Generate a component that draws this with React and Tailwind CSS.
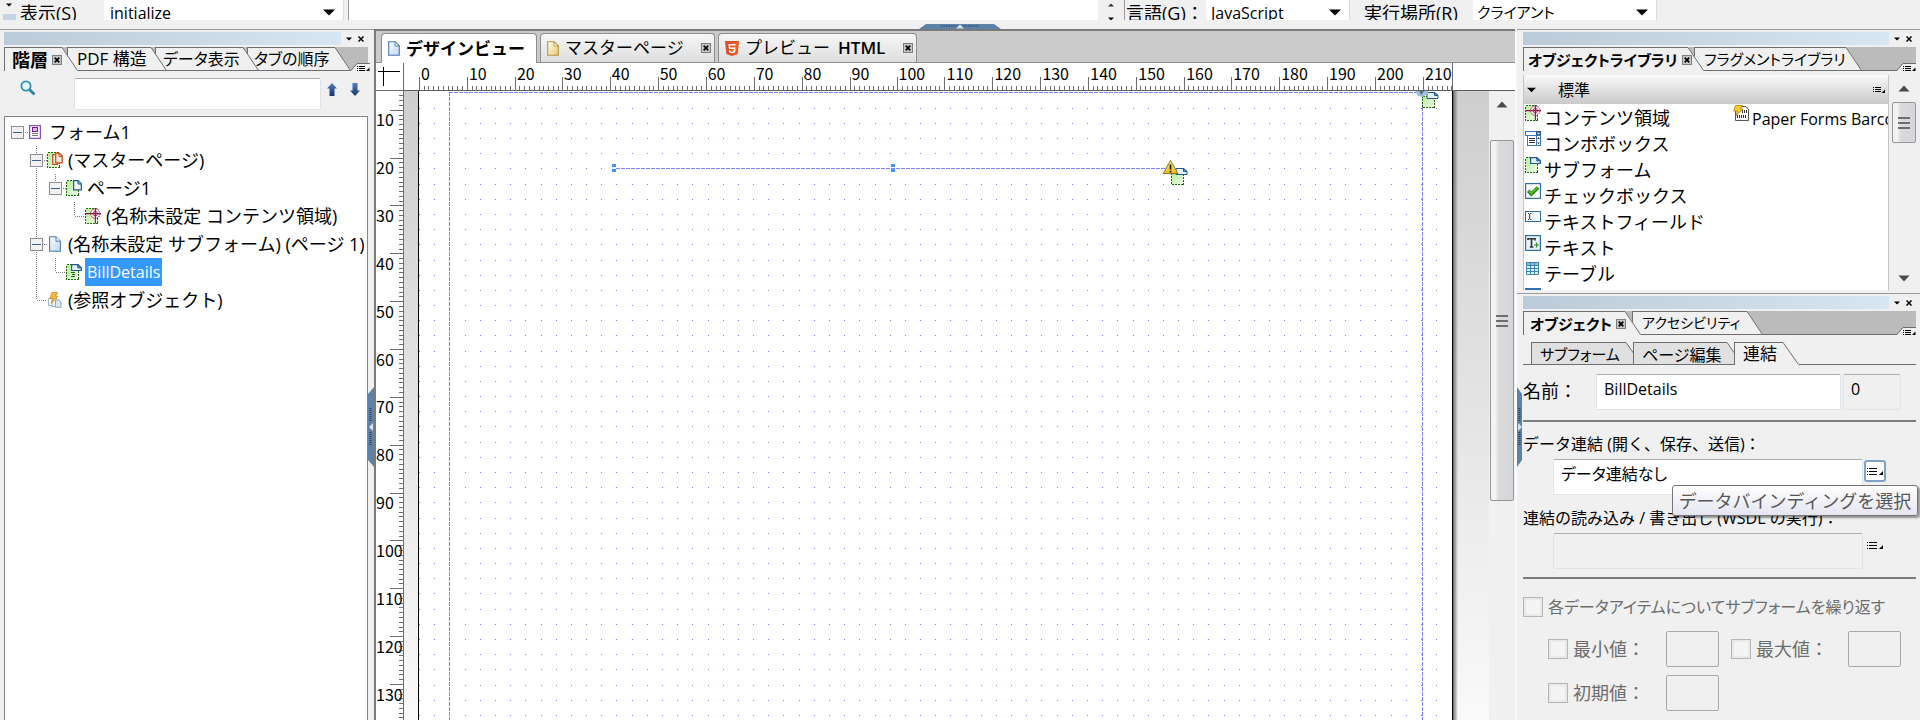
import React from "react";

const UI = "font-['Open_Sans','Noto_Sans_CJK_JP',sans-serif]";

/* ---------- small glyphs ---------- */

function Caret({ className = "" }) {
  return (
    <svg width="12" height="7" viewBox="0 0 12 7" className={className} aria-hidden="true">
      <path d="M0 0.5H12L6 6.5Z" fill="#000" />
    </svg>
  );
}

function TinyCaret() {
  return (
    <svg width="6" height="4" viewBox="0 0 6 4" aria-hidden="true">
      <path d="M0 0.5H6L3 3.5Z" fill="#000" />
    </svg>
  );
}

function TinyX() {
  return (
    <svg width="6" height="6" viewBox="0 0 6 6" aria-hidden="true">
      <path d="M0.5 0.5L5.5 5.5M5.5 0.5L0.5 5.5" stroke="#000" strokeWidth="1.5" />
    </svg>
  );
}

function CloseBox() {
  return (
    <button type="button" aria-label="閉じる" className="relative z-10 block size-[10px] shrink-0">
      <svg width="10" height="10" viewBox="0 0 10 10" aria-hidden="true">
        <rect x="0.5" y="0.5" width="9" height="9" fill="#c8c8c8" stroke="#7c7c7c" />
        <path d="M2.7 2.7L7.3 7.3M7.3 2.7L2.7 7.3" stroke="#000" strokeWidth="1.7" />
      </svg>
    </button>
  );
}

function MenuGlyph({ wide }) {
  if (wide) {
    return (
      <svg width="16" height="9" viewBox="0 0 16 9" shapeRendering="crispEdges" aria-hidden="true">
        <path d="M0 1.5H1M0 4.5H1M0 7.5H1M2 1.5H10M2 4.5H10M2 7.5H10" stroke="#000" />
        <path d="M16 4V8H12Z" fill="#000" shapeRendering="auto" />
      </svg>
    );
  }
  return (
    <svg width="13" height="8" viewBox="0 0 13 8" shapeRendering="crispEdges" aria-hidden="true">
      <path d="M0 1.5H1M0 3.5H1M0 5.5H1M2 1.5H8M2 3.5H8M2 5.5H8" stroke="#000" />
      <path d="M12 3.5V7H8.5Z" fill="#000" shapeRendering="auto" />
    </svg>
  );
}

function ArrowTri({ down }) {
  return (
    <svg width="12" height="7" viewBox="0 0 12 7" aria-hidden="true">
      <path d={down ? "M0.5 0.5H11.5L6 6.5Z" : "M6 0.5L11.5 6.5H0.5Z"} fill="#4a4a4a" />
    </svg>
  );
}

/* ---------- object icons ---------- */

function GreenBox({ w = 13, h = 16, x = 0, y = 0 }) {
  return (
    <g>
      <rect x={x + 0.5} y={y + 0.5} width={w - 1} height={h - 1} fill="url(#leaf)" />
      <rect
        x={x + 0.5}
        y={y + 0.5}
        width={w - 1}
        height={h - 1}
        fill="none"
        stroke="#1d6b0a"
        strokeDasharray="2 1"
        shapeRendering="crispEdges"
      />
    </g>
  );
}

function Icon({ kind }) {
  const art = {
    form: (
      <>
        <rect x="1.6" y="1.6" width="10.8" height="12.8" fill="#fff" stroke="#8a4fc0" strokeWidth="1.3" />
        <rect x="4.5" y="3.5" width="5" height="4" fill="#d9b8ee" stroke="#6d1ea0" />
        <path d="M4 9.5H10M4 11.5H10" stroke="#777" />
      </>
    ),
    master: (
      <>
        <GreenBox />
        <path d="M5.7 2.7H10.5V12.3H5.7Z" fill="#fff" stroke="#c8501c" strokeWidth="1.3" />
        <path d="M8.7 1.2H12.3L15.2 4V10.8H8.7Z" fill="#fbe6da" stroke="#c8501c" strokeWidth="1.3" />
        <path d="M12 1.2V4.4H15.2" fill="none" stroke="#c8501c" />
      </>
    ),
    page: (
      <>
        <GreenBox />
        <path d="M7.6 0.7H12.2L15.3 3.8V9.8H7.6Z" fill="#eef5fc" stroke="#1f5a92" strokeWidth="1.2" />
        <path d="M12 0.9V4H15.2" fill="#9cc0e2" stroke="#1f5a92" />
      </>
    ),
    content: (
      <>
        <GreenBox />
        <circle cx="10.3" cy="5.6" r="4.8" fill="#fbe4ee" stroke="#a33a68" strokeDasharray="1.6 0.6" />
        <circle cx="10.3" cy="5.6" r="2.2" fill="none" stroke="#a33a68" strokeWidth="0.9" />
        <path d="M0 5.6H16M10.4 0V15.5" stroke="#8e1c4c" strokeWidth="1.2" />
      </>
    ),
    doc: (
      <>
        <path d="M2.6 0.7H9L13.4 5.2V15.3H2.6Z" fill="url(#sky)" stroke="#4a7db0" strokeWidth="1.1" />
        <path d="M9 0.8V5.2H13.3" fill="#f7fbff" stroke="#4a7db0" />
      </>
    ),
    subform: (
      <>
        <GreenBox />
        <path d="M5.6 0.7H12L15.3 3.8V6.5H5.6Z" fill="#e6f1fb" stroke="#1f5a92" strokeWidth="1.2" />
        <path d="M11.8 0.9V3.9H15.2Z" fill="#7ba9d4" stroke="#1f5a92" />
      </>
    ),
    flow: (
      <>
        <GreenBox />
        <path d="M5.6 0.7H12L15.3 3.8V6.5H5.6Z" fill="#e6f1fb" stroke="#1f5a92" strokeWidth="1.2" />
        <path d="M11.8 0.9V3.9H15.2Z" fill="#7ba9d4" stroke="#1f5a92" />
        <path d="M5 8.5H9M6 10.5H9M5 12.5H9" stroke="#1d6b0a" />
      </>
    ),
    reference: (
      <>
        <path d="M1.5 6.5H6V13.5H1.5Z" fill="#fff" stroke="#9fb2c9" />
        <path d="M5 6.5H9.5V14.5H5Z" fill="#f2f6fb" stroke="#9fb2c9" />
        <path d="M8.5 8H12L14 10V15.3H8.5Z" fill="#dbe7f5" stroke="#8ba6c6" />
        <path d="M5 0.5H10.5L8.5 4.2H11L4.2 11.5L5.8 6.6H2.8Z" fill="#f6b83c" stroke="#d2862a" strokeWidth="0.8" />
      </>
    ),
    combo: (
      <>
        <rect x="0.5" y="0.5" width="15" height="4" fill="#fff" stroke="#3c78b0" />
        <rect x="11" y="0" width="5" height="5" fill="#2a5d8e" />
        <path d="M12 1.8H15L13.5 3.6Z" fill="#fff" />
        <rect x="2.5" y="4.5" width="13" height="10" fill="#fff" stroke="#3c78b0" />
        <path d="M4 7.5H10M4 9.5H10M4 11.5H10" stroke="#333" />
        <path d="M11.5 5V14" stroke="#3c78b0" />
        <path d="M12.3 8H14.9L13.6 6ZM12.3 11.5H14.9L13.6 13.3Z" fill="#333" />
      </>
    ),
    check: (
      <>
        <rect x="0.6" y="0.6" width="14.8" height="14.8" fill="#fff" stroke="#2f6fab" strokeWidth="1.2" />
        <path d="M3.2 7.8L6.4 11L13 4.4" fill="none" stroke="#1d7d05" strokeWidth="3.6" />
        <path d="M3.8 7.9L6.4 10.4L12.5 4.6" fill="none" stroke="#4ec422" strokeWidth="1.8" />
      </>
    ),
    field: (
      <>
        <rect x="0.5" y="2.5" width="15" height="10" fill="#f4f9ff" stroke="#2f6fab" />
        <path d="M3 4.5H4.2M5.2 4.5H6.4M3 10.5H4.2M5.2 10.5H6.4M4.7 5V10" stroke="#333" />
      </>
    ),
    text: (
      <>
        <rect x="0.6" y="0.6" width="14.8" height="14.8" fill="#e9f2fb" stroke="#2f6fab" strokeWidth="1.2" />
        <path d="M3 5V3.8H10V5.4M6.5 4V12.2M4.8 12H8.4" fill="none" stroke="#333" strokeWidth="1.6" />
        <path d="M11.5 7.5V12.5M9 10H14" stroke="#239a12" strokeWidth="1.2" />
      </>
    ),
    table: (
      <>
        <rect x="1" y="1" width="13" height="13" fill="#e2f2fa" />
        <rect x="1" y="1" width="13" height="3" fill="#8cc3e0" />
        <path d="M1.5 1.5H13.5V13.5H1.5ZM1.5 4.5H13.5M1.5 7.5H13.5M1.5 10.5H13.5M5.5 1.5V13.5M9.5 1.5V13.5" fill="none" stroke="#3b85ad" />
      </>
    ),
    barcode: (
      <>
        <path d="M3.5 1.5H12.5L15.5 4V15.5H2.5V1.5Z" fill="#fff" stroke="#555" />
        <path d="M9.5 4V8M11.5 5V8M13.5 5V8M4.5 10V13M6.5 10V13M8.5 10V13M10.5 10V13M12.5 10V13" stroke="#333" />
        <path d="M2.5 0.5H9.5L7.5 4H10L3 10.5L4.5 6H0.8Z" fill="#ffce2e" stroke="#b98306" strokeWidth="0.9" />
      </>
    ),
  };
  return (
    <svg width="16" height="16" viewBox="0 0 16 16" className="block shrink-0" aria-hidden="true">
      {art[kind]}
    </svg>
  );
}

function PageGlyph({ gold }) {
  return (
    <svg width="12" height="15" viewBox="0 0 12 15" className="shrink-0" aria-hidden="true">
      <path
        d="M0.7 0.7H7L11.3 5V14.3H0.7Z"
        fill={gold ? "url(#gold)" : "url(#sky)"}
        stroke={gold ? "#b8923c" : "#4a76b4"}
        strokeWidth="1.1"
      />
      <path d="M7 0.8V5H11.2Z" fill="#fff" stroke={gold ? "#b8923c" : "#4a76b4"} strokeWidth="0.9" />
    </svg>
  );
}

function Html5Glyph() {
  return (
    <svg width="14" height="15" viewBox="0 0 14 15" className="shrink-0" aria-hidden="true">
      <path d="M0 0H14L12.7 13L7 15L1.3 13Z" fill="#e44d26" />
      <path d="M7 1.2V13.7L11.6 12.1L12.7 1.2Z" fill="#f16529" />
      <path d="M10.5 3.8H4.2L4.6 7.2H9.8L9.4 10.6L7 11.4L4.7 10.6L4.6 9.2" fill="none" stroke="#fff" strokeWidth="1.5" />
    </svg>
  );
}

function Gradients() {
  return (
    <svg width="0" height="0" className="absolute" aria-hidden="true">
      <defs>
        <linearGradient id="leaf" x1="0" y1="0" x2="1" y2="1">
          <stop offset="0" stopColor="#b4ec96" />
          <stop offset="1" stopColor="#f4fdee" />
        </linearGradient>
        <linearGradient id="sky" x1="0" y1="0" x2="1" y2="1">
          <stop offset="0" stopColor="#ffffff" />
          <stop offset="1" stopColor="#b9d6f5" />
        </linearGradient>
        <linearGradient id="gold" x1="0" y1="0" x2="1" y2="1">
          <stop offset="0" stopColor="#ffffff" />
          <stop offset="1" stopColor="#e8c766" />
        </linearGradient>
        <linearGradient id="warn" x1="0" y1="0" x2="0" y2="1">
          <stop offset="0" stopColor="#fff08a" />
          <stop offset="1" stopColor="#eeb90e" />
        </linearGradient>
        <linearGradient id="steel" x1="0" y1="0" x2="0" y2="1">
          <stop offset="0" stopColor="#4f7fc0" />
          <stop offset="1" stopColor="#1c3470" />
        </linearGradient>
      </defs>
    </svg>
  );
}

/* ---------- top script bar ---------- */

function BarSelect({ id, value, className }) {
  return (
    <div className={`relative flex h-[26px] shrink-0 items-center border-r border-[#dcdcdc] bg-white ${className}`}>
      <select
        id={id}
        defaultValue={value}
        className="h-full w-full appearance-none bg-transparent text-black [font-feature-settings:'palt'] focus:outline-none"
      >
        <option>{value}</option>
      </select>
      <Caret className="pointer-events-none absolute right-2 top-[9px]" />
    </div>
  );
}

function ScriptBar() {
  return (
    <header className="flex h-5 shrink-0 items-start overflow-hidden bg-[#f0f0f0] text-lg">
      <div className="flex w-[18px] shrink-0 flex-col items-center pt-[3px]">
        <TinyCaret />
        <div className="mt-[7px] h-3 w-[13px] bg-[#c3d4e5]" />
      </div>
      <label htmlFor="event" className="flex h-[26px] w-[86px] shrink-0 items-center pl-[2px] whitespace-nowrap">
        表示(S)
      </label>
      <BarSelect id="event" value="initialize" className="w-60 pl-[6px] text-base" />
      <textarea
        aria-label="スクリプト"
        className="ml-1 block h-[26px] min-w-0 flex-1 resize-none border-l border-[#9a9a9a] bg-white focus:outline-none"
      />
      <div className="flex w-[26px] shrink-0 flex-col items-center gap-[10px] pt-[3px]">
        <svg width="6" height="4" viewBox="0 0 6 4" aria-hidden="true">
          <path d="M0 3.5H6L3 0.5Z" fill="#333" />
        </svg>
        <TinyCaret />
      </div>
      <label
        htmlFor="language"
        className="flex h-[26px] w-[82px] shrink-0 items-center border-l border-[#9a9a9a] pl-px whitespace-nowrap"
      >
        言語(G)：
      </label>
      <BarSelect id="language" value="JavaScript" className="w-[144px] pl-[5px] text-base" />
      <label htmlFor="runat" className="flex h-[26px] w-[123px] shrink-0 items-center pl-[14px] whitespace-nowrap">
        実行場所(R)
      </label>
      <BarSelect id="runat" value="クライアント" className="w-[184px] pl-1 text-[15px]" />
      <div className="w-[263px] shrink-0" />
    </header>
  );
}

/* ---------- splitter handles ---------- */

function TopHandle() {
  return (
    <div className="flex h-[9px] shrink-0 items-end justify-center bg-[#f0f0f0]">
      <svg width="82" height="5" viewBox="0 0 82 5" aria-hidden="true">
        <path d="M0 5L7 0H75L82 5Z" fill="#5d82aa" />
        <path d="M22 2H38M44 2H60" stroke="#24425f" strokeDasharray="1.5 1" />
        <path d="M37 4.5L41 0.5L45 4.5Z" fill="#d6e2ee" />
      </svg>
    </div>
  );
}

function SideHandle({ right }) {
  return (
    <svg width="6" height="80" viewBox="0 0 6 80" className="shrink-0" aria-hidden="true">
      <path d={right ? "M0 0L5 7V73L0 80Z" : "M6 0L0 7V73L6 80Z"} fill="#5d82aa" />
      <path d="M2.5 21V35M2.5 45V59" stroke="#24425f" strokeWidth="2" strokeDasharray="1 1" />
      <path d={right ? "M1 36L5 40L1 44Z" : "M5 36L1 40L5 44Z"} fill="#d6e2ee" />
    </svg>
  );
}

/* ---------- docked panel chrome ---------- */

function TitleStrip() {
  return (
    <div className="flex h-[13px] shrink-0">
      <div className="min-w-0 flex-1 bg-linear-to-r from-[#bccbd9] to-[#d8e5f2]" />
      <div className="flex w-[27px] items-center gap-[6px] pl-[5px]">
        <TinyCaret />
        <TinyX />
      </div>
    </div>
  );
}

function Tab({ label, active, closable, className, size = "text-base" }) {
  return (
    <div className={`relative flex h-6 shrink-0 ${className}`}>
      <div
        className={`flex min-w-0 flex-1 items-center gap-1 border-l border-t border-[#6e6e6e] bg-[#f0f0f0] ${
          active ? "" : "border-b"
        }`}
      >
        <button
          type="button"
          className={`relative z-10 whitespace-nowrap text-black ${size} ${active ? "font-bold" : ""}`}
        >
          {label}
        </button>
        {closable && <CloseBox />}
      </div>
      <svg width="16" height="24" viewBox="0 0 16 24" className="shrink-0" aria-hidden="true">
        <path d="M0 0L16 24H0Z" fill="#f0f0f0" />
        <path d="M0 0.5L15.5 23.5" stroke="#6e6e6e" fill="none" />
        {!active && <path d="M0 23.5H16" stroke="#6e6e6e" />}
      </svg>
    </div>
  );
}

function TabStrip({ children }) {
  return (
    <div className="flex h-6 shrink-0 bg-[#bbbbbb] leading-5 [font-feature-settings:'palt']">
      {children}
      <div className="min-w-0 flex-1 border-b border-[#6e6e6e]" />
      <button type="button" aria-label="パネルメニュー" className="relative flex w-[19px] shrink-0 items-end">
        <svg width="19" height="8" viewBox="0 0 19 8" aria-hidden="true">
          <path d="M0 8L6 0.5H19V8Z" fill="#f0f0f0" />
          <path d="M0 7.5L6 0.5H19" fill="none" stroke="#6e6e6e" />
          <path d="M6 3.5H7M6 5.5H7M6 7.5H7M8 3.5H14M8 5.5H14M8 7.5H14" stroke="#000" shapeRendering="crispEdges" />
          <path d="M18.5 4.5V8H15Z" fill="#000" />
        </svg>
      </button>
    </div>
  );
}

/* ---------- hierarchy panel ---------- */

const TREE = [
  { level: 0, icon: "form", label: "フォーム1", open: true, guides: [] },
  { level: 1, icon: "master", label: "(マスターページ)", open: true, more: true, guides: [] },
  { level: 2, icon: "page", label: "ページ1", open: true, guides: [true] },
  { level: 3, icon: "content", label: "(名称未設定 コンテンツ領域)", guides: [true, false] },
  { level: 1, icon: "doc", label: "(名称未設定 サブフォーム) (ページ 1)", open: true, more: true, guides: [] },
  { level: 2, icon: "flow", label: "BillDetails", selected: true, guides: [true] },
  { level: 1, icon: "reference", label: "(参照オブジェクト)", guides: [] },
];

function TreeNodeLead({ node }) {
  return (
    <svg width="17" height="28" viewBox="0 0 17 28" className="shrink-0" shapeRendering="crispEdges" aria-hidden="true">
      <g stroke="#7d7d7d" strokeDasharray="1 1" fill="none">
        {node.level > 0 && <path d={`M6.5 0V${node.more ? 28 : 14}`} />}
        <path d={node.open ? "M14 14.5H17" : "M7 14.5H17"} />
      </g>
      {node.open && (
        <g>
          <rect x="0.5" y="8.5" width="12" height="12" fill="#f1f1f1" stroke="#8f8f8f" />
          <path d="M2 14.5H11" stroke="#3a5f9c" />
        </g>
      )}
    </svg>
  );
}

function TreeRow({ node }) {
  return (
    <li className="flex h-7 items-center">
      {node.level > 0 && <span className="w-[19px] shrink-0" />}
      {node.guides.map((line, i) => (
        <svg key={i} width="19" height="28" viewBox="0 0 19 28" className="shrink-0" shapeRendering="crispEdges" aria-hidden="true">
          {line && <path d="M6.5 0V28" stroke="#7d7d7d" strokeDasharray="1 1" />}
        </svg>
      ))}
      <TreeNodeLead node={node} />
      <Icon kind={node.icon} />
      <button
        type="button"
        className={`ml-[3px] h-7 px-[2px] whitespace-nowrap ${
          node.selected ? "bg-[#3399ff] text-base text-white" : "text-[18px] leading-7 text-black"
        }`}
      >
        {node.label}
      </button>
    </li>
  );
}

function HierarchyPanel() {
  return (
    <aside className="flex w-[374px] shrink-0 border-t border-[#9a9a9a] bg-[#f0f0f0]">
      <div className="flex min-w-0 flex-1 flex-col pl-1 pt-[2px]">
        <TitleStrip />
        <div className="mt-[2px] flex flex-col">
          <TabStrip>
            <Tab label="階層" active closable size="text-lg" className="z-40 w-[74px] [&>div]:pl-[7px]" />
            <Tab label="PDF 構造" size="text-[17px]" className="z-30 -ml-[11px] w-[100px] [&>div]:pl-[9px]" />
            <Tab label="データ表示" className="z-20 -ml-[12px] w-[104px] [&>div]:pl-[7px]" />
            <Tab label="タブの順序" className="z-10 -ml-[12px] w-[104px] [&>div]:pl-[6px]" />
          </TabStrip>
        </div>
        <div className="flex h-[45px] shrink-0 items-start pt-[7px]">
          <svg width="16" height="16" viewBox="0 0 16 16" className="mt-[2px] ml-4 shrink-0" aria-hidden="true">
            <path d="M9 9L14.5 14.5" stroke="#2c7fa6" strokeWidth="2.6" />
            <circle cx="6" cy="6" r="4.6" fill="#e3f5fc" stroke="#2f8fb5" strokeWidth="1.8" />
          </svg>
          <input
            type="text"
            aria-label="検索"
            className="ml-[38px] h-8 min-w-0 flex-1 rounded-[2px] border border-[#dfe3ec] border-t-[#abadb3] bg-white px-2 text-base focus:outline-none"
          />
          <button type="button" aria-label="前へ" className="mt-[5px] ml-[6px]">
            <svg width="10" height="13" viewBox="0 0 10 13" aria-hidden="true">
              <path d="M5 0L10 5.5H7.5V13H2.5V5.5H0Z" fill="url(#steel)" />
            </svg>
          </button>
          <button type="button" aria-label="次へ" className="mt-[5px] mr-2 ml-[13px]">
            <svg width="10" height="13" viewBox="0 0 10 13" aria-hidden="true">
              <path d="M5 13L10 7.5H7.5V0H2.5V7.5H0Z" fill="url(#steel)" />
            </svg>
          </button>
        </div>
        <ul className="min-h-0 flex-1 overflow-hidden border border-b-0 border-[#828790] bg-white pt-[1px] pl-[6px]">
          {TREE.map((node) => (
            <TreeRow key={node.label} node={node} />
          ))}
        </ul>
      </div>
      <div className="flex w-[6px] shrink-0 flex-col items-end pt-[357px]">
        <SideHandle />
      </div>
    </aside>
  );
}

/* ---------- design canvas ---------- */

const MM = 4.785;
const GRID = 15.18;
const PAGE_W = 1033;
const PAGE_H = 1420;
const RULER_TEXT = "font-['Noto_Sans_CJK_JP',sans-serif] text-base";

const range = (n) => Array.from({ length: n }, (_, i) => i);

function HorizontalRuler() {
  const ticks = range(217)
    .map((n) => `M${Math.floor(15.4 + n * MM) + 0.5} ${n % 10 === 0 ? 14 : 23}V27`)
    .join("");
  return (
    <div className="flex h-[28px] min-w-0 flex-1 overflow-hidden border-b border-[#5f5f5f] bg-white">
      <svg
        width="1049"
        height="27"
        viewBox="0 0 1049 27"
        className={`shrink-0 border-r border-[#6e6e6e] ${RULER_TEXT}`}
      >
        <path d={ticks} stroke="#6e6e6e" shapeRendering="crispEdges" />
        {range(22).map((n) => (
          <text key={n} x={Math.floor(17.4 + n * 10 * MM)} y="17">
            {n * 10}
          </text>
        ))}
      </svg>
    </div>
  );
}

function VerticalRuler() {
  const ticks = range(290)
    .filter((n) => n > 6)
    .map((n) => `M${n % 10 === 0 ? 14 : 23} ${Math.floor(n * MM - 28.6) + 0.5}H27`)
    .join("");
  return (
    <div className="w-7 shrink-0 overflow-hidden border-r border-[#6e6e6e] bg-white">
      <svg width="27" height={PAGE_H} viewBox={`0 0 27 ${PAGE_H}`} className={`block ${RULER_TEXT}`}>
        <path d={ticks} stroke="#6e6e6e" shapeRendering="crispEdges" />
        {range(29)
          .slice(1)
          .map((n) => (
            <text key={n} x="0" y={Math.floor(n * 10 * MM - 12)}>
              {n * 10}
            </text>
          ))}
      </svg>
    </div>
  );
}

function PageSurface() {
  const dots = range(90)
    .map((r) => {
      const y = Math.round(16.7 + r * GRID) + 0.5;
      return range(68)
        .map((c) => `M${Math.floor(0.6 + c * GRID)} ${y}h1`)
        .join("");
    })
    .join("");
  return (
    <svg width={PAGE_W} height={PAGE_H} viewBox={`0 0 ${PAGE_W} ${PAGE_H}`} className="block shrink-0 bg-white">
      <g shapeRendering="crispEdges">
        <path d={dots} stroke="#7c7cf0" />
        <path d={`M30.5 1V${PAGE_H}M1003.5 1V${PAGE_H}`} stroke="#fff" />
        <path d={`M30.5 1V${PAGE_H}M30 1.5H1004M1003.5 1V${PAGE_H}`} stroke="#8080f8" strokeDasharray="4 1" />
        <path d="M193 77.5H748" stroke="#fff" />
        <path d="M197 77.5H748" stroke="#8080f8" strokeDasharray="4 1" />
        <path d="M193 73h4v3h-4zM193 78h4v3h-4zM472 73h4v3h-4zM472 78h4v3h-4z" fill="#3399ff" />
      </g>
      <GreenBox x={752} y={82} w={13} h={12} />
      <path d="M757 77.5H765L768 80.5V83.5H757Z" fill="#e6f1fb" stroke="#1f5a92" />
      <path d="M764.5 77.5V80.5H768Z" fill="#7ba9d4" stroke="#1f5a92" />
      <path d="M751.5 69.5L759 82.6H744.2Z" fill="url(#warn)" stroke="#8d7420" strokeLinejoin="round" />
      <path d="M751.5 73.5V78.5M751.5 79.8V81.4" stroke="#1b1b1b" strokeWidth="1.7" />
      <GreenBox x={1003} y={5} w={13} h={12} />
      <path d="M1008 1.5H1016L1019 4.5V7.5H1008Z" fill="#e6f1fb" stroke="#1f5a92" />
      <path d="M1015.5 1.5V4.5H1019Z" fill="#7ba9d4" stroke="#1f5a92" />
      <path d="M996 0H1009V2L1004 6L999 5Z" fill="#9fc0dc" />
      <path d="M1000 0H1005L1002.5 4Z" fill="#5b6f80" />
    </svg>
  );
}

function DocTab({ icon, label, active, closable, className }) {
  return (
    <div
      className={`relative flex shrink-0 items-center rounded-t-[4px] border border-b-0 border-[#8e8e8e] pl-[6px] ${
        active ? "-mb-px h-[30px] bg-white" : "h-[29px] bg-linear-to-b from-[#f7f7f7] to-[#dedede]"
      } ${className}`}
    >
      {icon}
      <button
        type="button"
        className={`flex gap-2 pl-[6px] text-[17px] leading-6 whitespace-nowrap text-black ${
          active ? "font-bold" : ""
        }`}
      >
        {label}
      </button>
      {closable && (
        <span className="ml-auto">
          <CloseBox />
        </span>
      )}
    </div>
  );
}

function DesignView() {
  return (
    <main className="flex min-w-0 flex-1 flex-col border-t-2 border-l-2 border-[#7a7a7a] bg-white">
      <div className="flex h-8 shrink-0 items-end gap-[3px] border-b border-[#8e8e8e] bg-[#cbcbcb] pl-[5px]">
        <DocTab icon={<PageGlyph />} label="デザインビュー" active className="w-[156px]" />
        <DocTab icon={<PageGlyph gold />} label="マスターページ" closable className="w-[175px] pr-[3px]" />
        <DocTab
          icon={<Html5Glyph />}
          label={
            <>
              <span>プレビュー</span>
              <span className="font-semibold">HTML</span>
            </>
          }
          closable
          className="w-[199px] pr-[3px]"
        />
      </div>
      <div className="flex h-7 shrink-0">
        <div className="w-7 shrink-0 border-r border-b border-[#6e6e6e]">
          <svg width="27" height="27" viewBox="0 0 27 27" shapeRendering="crispEdges" aria-hidden="true">
            <path d="M2 8.5H24M7.5 4V23" stroke="#000" />
          </svg>
        </div>
        <HorizontalRuler />
      </div>
      <div className="flex min-h-0 flex-1">
        <VerticalRuler />
        <div className="flex min-w-0 flex-1 overflow-hidden bg-linear-to-b from-[#cecece] to-[#fafafa]">
          <div className="w-[15px] shrink-0 border-r border-black" />
          <PageSurface />
          <div className="w-[6px] shrink-0 border-l border-black bg-linear-to-r from-[#6a6a6a] to-transparent" />
        </div>
        <div className="flex w-[26px] shrink-0 flex-col items-center bg-[#f0f0f0]">
          <button type="button" aria-label="上へスクロール" className="flex h-[49px] w-full shrink-0 items-start justify-center pt-[10px]">
            <ArrowTri />
          </button>
          <div className="flex h-[361px] w-6 shrink-0 flex-col items-center justify-center gap-[3px] rounded-[2px] border border-[#979797] bg-linear-to-r from-[#f3f3f3] from-20% via-[#d9dadc] via-35% to-[#d5d6d9] [&>i]:h-[2px] [&>i]:w-3 [&>i]:bg-[#6e6e6e]">
            <i />
            <i />
            <i />
          </div>
        </div>
      </div>
    </main>
  );
}

/* ---------- object library ---------- */

const LIBRARY = [
  ["content", "コンテンツ領域"],
  ["combo", "コンボボックス"],
  ["subform", "サブフォーム"],
  ["check", "チェックボックス"],
  ["field", "テキストフィールド"],
  ["text", "テキスト"],
  ["table", "テーブル"],
];

function LibraryItem({ icon, label, latin }) {
  return (
    <li className="flex h-[26px] gap-[3px]">
      <Icon kind={icon} />
      <button type="button" className={`h-[26px] whitespace-nowrap ${latin ? "text-base leading-[28px]" : "text-lg leading-[26px]"}`}>
        {label}
      </button>
    </li>
  );
}

function LibraryPanel() {
  return (
    <section className="flex h-[264px] shrink-0 flex-col border-t border-[#9a9a9a] pt-[2px] pr-1 pl-[6px]">
      <TitleStrip />
      <div className="mt-[2px]">
        <TabStrip>
          <Tab
            label="オブジェクトライブラリ"
            active
            closable
            size="text-[15px]"
            className="z-20 w-[181px] [&>div]:pl-[4px]"
          />
          <Tab label="フラグメントライブラリ" size="text-[15px]" className="z-10 -ml-[10px] w-[168px] [&>div]:pl-[9px]" />
        </TabStrip>
      </div>
      <div className="mt-1 flex min-h-0 flex-1">
        <div className="flex min-w-0 flex-1 flex-col border-x border-[#c4c4c4] bg-white">
          <button
            type="button"
            className="flex h-[29px] shrink-0 items-center bg-linear-to-b from-[#fafafa] to-[#c9c9c9] pr-[2px] pl-[3px] text-base leading-5"
          >
            <Caret className="h-[6px] w-[9px]" />
            <span className="ml-[22px]">標準</span>
            <span className="ml-auto">
              <MenuGlyph />
            </span>
          </button>
          <div className="grid min-h-0 flex-1 grid-cols-[208px_minmax(0,1fr)] overflow-hidden pt-px pl-[1px]">
            <ul>
              {LIBRARY.map(([icon, label]) => (
                <LibraryItem key={icon} icon={icon} label={label} />
              ))}
              <li className="h-px">
                <div className="mt-[1px] h-[2px] w-4 bg-[#2f6fab]" />
              </li>
            </ul>
            <ul className="overflow-hidden">
              <LibraryItem icon="barcode" label="Paper Forms Barcode" latin />
            </ul>
          </div>
        </div>
        <div className="ml-[2px] flex w-[25px] shrink-0 flex-col items-center bg-[#f0f0f0]">
          <button type="button" aria-label="上へスクロール" className="flex h-[27px] w-full shrink-0 items-center justify-center">
            <ArrowTri />
          </button>
          <div className="flex h-[41px] w-6 shrink-0 flex-col items-center justify-center gap-[3px] rounded-[2px] border border-[#979797] bg-linear-to-r from-[#f3f3f3] from-20% via-[#d9dadc] via-35% to-[#d5d6d9] [&>i]:h-[2px] [&>i]:w-3 [&>i]:bg-[#6e6e6e]">
            <i />
            <i />
            <i />
          </div>
          <button type="button" aria-label="下へスクロール" className="mt-auto flex h-6 w-full items-center justify-center">
            <ArrowTri down />
          </button>
        </div>
      </div>
      <div className="h-[3px] shrink-0" />
    </section>
  );
}

/* ---------- object properties ---------- */

const FIELD = "rounded-[2px] border border-[#dfe3ec] border-t-[#abadb3] focus:outline-none";

function SubTab({ label, active, className, size = "text-base" }) {
  return (
    <div className={`relative flex h-[23px] shrink-0 leading-5 ${className}`}>
      <button
        type="button"
        className={`min-w-0 flex-1 border-t border-l border-[#6e6e6e] pl-2 text-left whitespace-nowrap ${size} ${
          active ? "bg-[#f0f0f0]" : "border-b bg-[#e0e0e0]"
        }`}
      >
        <span className="relative z-10 leading-5">{label}</span>
      </button>
      <svg width="16" height="23" viewBox="0 0 16 23" className="shrink-0" aria-hidden="true">
        <path d="M0 0L16 23H0Z" fill={active ? "#f0f0f0" : "#e0e0e0"} />
        <path d="M0 0.5L15.5 22.5" stroke="#6e6e6e" fill="none" />
        {!active && <path d="M0 22.5H16" stroke="#6e6e6e" />}
      </svg>
    </div>
  );
}

function Tick({ id, label, className = "" }) {
  return (
    <span className={`flex items-center gap-[5px] ${className}`}>
      <input
        id={id}
        type="checkbox"
        disabled
        className="size-5 shrink-0 appearance-none border border-[#b5b5b5] bg-[#f4f4f4] inset-ring-2 inset-ring-[#e9e9e9]"
      />
      <label htmlFor={id} className="leading-6 whitespace-nowrap text-[#6d6d6d]">
        {label}
      </label>
    </span>
  );
}

function Limit({ label }) {
  return (
    <input
      type="text"
      aria-label={label}
      disabled
      className="h-9 w-[53px] shrink-0 rounded-[2px] border border-[#a9a9a9] bg-[#f0f0f0]"
    />
  );
}

function Rule() {
  return <hr className="h-[2px] shrink-0 border-0 bg-[#7c7c7c]" />;
}

function ObjectPanel() {
  return (
    <section className="flex min-h-0 flex-1 flex-col border-t border-[#9a9a9a] pt-[2px] pr-1 pl-[6px]">
      <TitleStrip />
      <div className="mt-[2px]">
        <TabStrip>
          <Tab label="オブジェクト" active closable size="text-[15px]" className="z-20 w-[118px] [&>div]:pl-[6px]" />
          <Tab label="アクセシビリティ" size="text-sm" className="z-10 -ml-[9px] w-[131px] [&>div]:pl-[9px]" />
        </TabStrip>
      </div>
      <div className="mt-[7px] flex shrink-0 [font-feature-settings:'palt']">
        <div className="w-2 border-b border-[#6e6e6e]" />
        <SubTab label="サブフォーム" size="text-[15px]" className="w-[111px]" />
        <SubTab label="ページ編集" className="z-10 -ml-[9px] w-[110px]" />
        <SubTab label="連結" active size="text-[17px]" className="z-20 -ml-[9px] w-[65px]" />
        <div className="min-w-0 flex-1 border-b border-[#6e6e6e]" />
      </div>

      <div className="flex flex-col text-base">
        <div className="mt-[9px] mr-[15px] flex h-9">
          <label htmlFor="object-name" className="w-[73px] shrink-0 text-lg leading-[34px] whitespace-nowrap">
            名前：
          </label>
          <input
            id="object-name"
            type="text"
            defaultValue="BillDetails"
            className={`min-w-0 flex-1 bg-white px-[7px] pb-[6px] ${FIELD}`}
          />
          <input
            type="text"
            aria-label="番号"
            readOnly
            defaultValue="0"
            className={`ml-[2px] w-[58px] shrink-0 bg-[#f0f0f0] px-[7px] pb-[6px] ${FIELD}`}
          />
        </div>
        <div className="mt-[10px]">
          <Rule />
        </div>
        <label htmlFor="binding" className="mt-2 h-[29px] leading-7 whitespace-nowrap">
          データ連結 (開く、保存、送信)：
        </label>
        <div className="relative flex h-9 pl-[30px]">
          <input
            id="binding"
            type="text"
            defaultValue="データ連結なし"
            className={`min-w-0 flex-1 bg-white px-[7px] pb-[6px] [font-feature-settings:'palt'] ${FIELD}`}
          />
          <button
            type="button"
            aria-label="データバインディングを選択"
            className="mt-px mr-[30px] ml-px flex size-[22px] shrink-0 items-center justify-center rounded-[3px] border-2 border-[#7da2ce] bg-white"
          >
            <MenuGlyph wide />
          </button>
          <div
            role="tooltip"
            className="absolute top-[26px] -right-[2px] z-30 flex h-[31px] w-[246px] items-center justify-center rounded-[3px] border border-[#767676] bg-linear-to-b from-white to-[#e4e5f0] text-lg leading-6 whitespace-nowrap text-[#575757] shadow-[2px_2px_2px_rgba(0,0,0,0.4)]"
          >
            データバインディングを選択
          </div>
        </div>
        <label htmlFor="wsdl" className="mt-[9px] h-[29px] leading-7 whitespace-nowrap">
          連結の読み込み / 書き出し (WSDL の実行)：
        </label>
        <div className="flex h-9 pl-[30px]">
          <input id="wsdl" type="text" readOnly className={`min-w-0 flex-1 bg-[#f0f0f0] px-[7px] ${FIELD}`} />
          <button
            type="button"
            aria-label="連結メニュー"
            className="mt-px mr-[30px] ml-px flex size-[22px] shrink-0 items-center justify-center"
          >
            <MenuGlyph wide />
          </button>
        </div>
        <div className="mt-2">
          <Rule />
        </div>
        <Tick
          id="repeat"
          label="各データアイテムについてサブフォームを繰り返す"
          className="mt-4 [font-feature-settings:'palt']"
        />
        <div className="mt-3 grid grid-cols-[118px_65px_117px_53px] items-center gap-y-2 pl-[25px] text-lg">
          <Tick id="min" label="最小値：" />
          <Limit label="最小値" />
          <Tick id="max" label="最大値：" />
          <Limit label="最大値" />
          <Tick id="initial" label="初期値：" />
          <Limit label="初期値" />
        </div>
      </div>
    </section>
  );
}

/* ---------- application ---------- */

export default function App() {
  return (
    <div className={`flex h-screen min-w-[1200px] flex-col overflow-hidden bg-[#f0f0f0] text-black ${UI}`}>
      <Gradients />
      <ScriptBar />
      <TopHandle />
      <div className="flex min-h-0 flex-1">
        <HierarchyPanel />
        <DesignView />
        <div className="relative flex w-[405px] shrink-0 flex-col border-l-2 border-[#fafafa] bg-[#f0f0f0]">
          <LibraryPanel />
          <ObjectPanel />
          <div className="pointer-events-none absolute top-[358px] left-0">
            <SideHandle right />
          </div>
        </div>
      </div>
    </div>
  );
}
